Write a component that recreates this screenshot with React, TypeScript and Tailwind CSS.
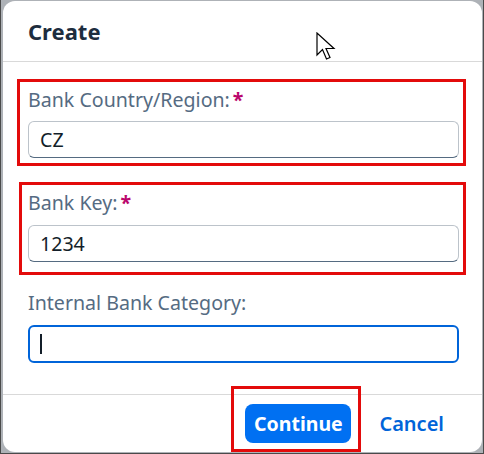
import React from "react";

const font = { fontFamily: '"Noto Sans", "Open Sans", Arial, sans-serif' };

const Label: React.FC<{ text: string; required?: boolean }> = ({ text, required }) => (
  <div className="flex items-start h-[28px] text-[19.6px] leading-[28px] text-[#556b82]">
    <span>{text}</span>
    {required && <span className="ml-[3px] font-bold text-[#ba066c]">*</span>}
  </div>
);

const Field: React.FC<{ value: string }> = ({ value }) => (
  <div className="h-[37px] rounded-[6px] border border-[#bcc3ca] border-b-[#556b81] bg-white px-[11px] flex items-center text-[19.6px] text-[#131e29]">
    {value}
  </div>
);

const Pointer = () => (
  <svg
    className="absolute left-[313px] top-[31px]"
    width="21"
    height="29"
    viewBox="0 0 21 29"
  >
    <path
      d="M1 1 L1 23 L6.5 17.5 L10.5 27 L14 25.5 L10 16.5 L18 16.5 Z"
      fill="#fff"
      stroke="#000"
      strokeWidth="1.2"
      strokeLinejoin="miter"
    />
  </svg>
);

export default function App() {
  return (
    <div
      className="w-[484px] h-[454px] bg-[#aeb2b7] border-l-[1px] border-r-[1px] border-b-[1px] border-[#4a4a4a] pl-[2px] pr-[1px] pt-[1px] pb-[1px] overflow-hidden"
      style={font}
    >
      <div className="relative h-full bg-white rounded-[12px] flex flex-col">
        <div className="h-[61px] border-b border-[#d9d9d9] flex items-center pl-[25px]">
          <h1 className="text-[22px] font-bold text-[#1d2d3e]">Create</h1>
        </div>
        <Pointer />

        <div className="flex-1 pt-[17px] pl-[14px] pr-[16px]">
          <div className="border-[3px] border-[#e30b0b] pl-[8px] pr-[4px] pt-[4px] pb-[5px]">
            <Label text="Bank Country/Region:" required />
            <div className="mt-[7px]">
              <Field value="CZ" />
            </div>
          </div>

          <div className="mt-[16px] ml-[2px] border-[3px] border-[#e30b0b] pl-[6px] pr-[4px] pt-[4px] pb-[10px]">
            <Label text="Bank Key:" required />
            <div className="mt-[8px]">
              <Field value="1234" />
            </div>
          </div>

          <div className="mt-[14px] pl-[11px] pr-[7px]">
            <Label text="Internal Bank Category:" />
            <div className="mt-[8px] h-[38px] rounded-[6px] border-2 border-[#0064d9] bg-white px-[10px] flex items-center">
              <span className="w-[2px] h-[20px] bg-[#131e29]" />
            </div>
          </div>
        </div>

        <div className="h-[58px] border-t border-[#d9d9d9] flex items-center justify-end pr-[26px] gap-[16px]">
          <div className="relative">
            <button className="h-[39px] w-[106px] rounded-[8px] bg-[#0070f2] text-white text-[19.5px] font-bold">
              Continue
            </button>
            <div className="absolute left-[-14px] right-[-10px] top-[-18px] bottom-[-9px] border-[3px] border-[#e30b0b]" />
          </div>
          <button className="h-[39px] px-[12px] text-[20px] font-semibold text-[#0064d9]">
            Cancel
          </button>
        </div>
      </div>
    </div>
  );
}
